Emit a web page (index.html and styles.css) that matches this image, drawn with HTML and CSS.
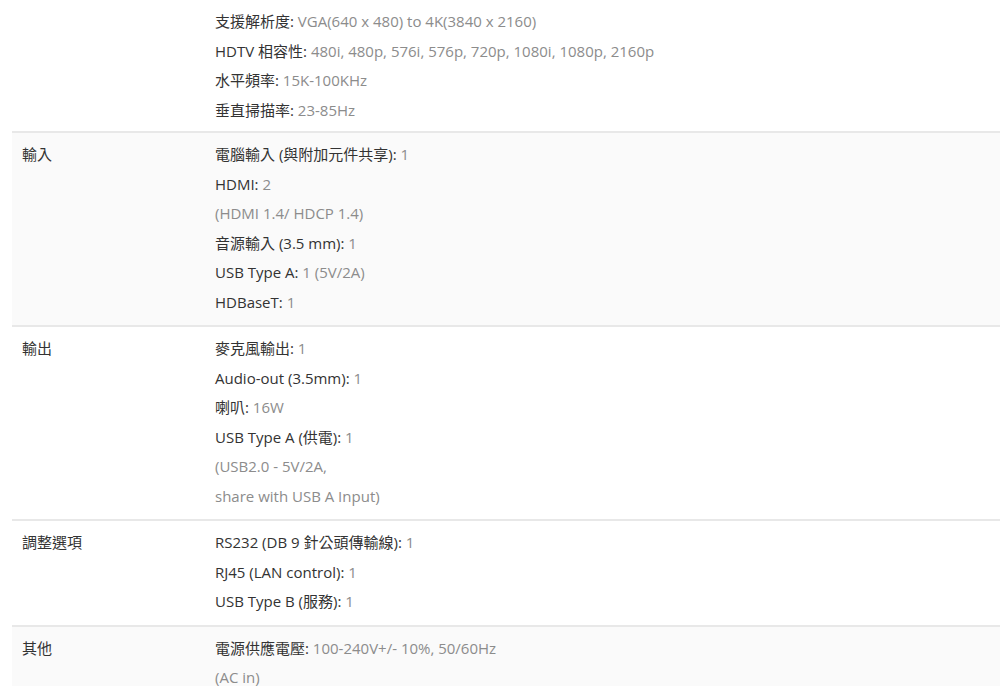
FILE: index.html
```html
<!DOCTYPE html>
<html lang="zh-Hant">
<head>
    <meta charset="UTF-8">
    <meta name="viewport" content="width=device-width, initial-scale=1.0">
    <title>規格</title>
    <link rel="stylesheet" href="styles.css">
</head>
<body>
    <div class="spec-table">
        <div class="spec-row first">
            <div class="spec-name"></div>
            <div class="spec-value">
                <p><span class="key">支援解析度:</span> VGA(640 x 480) to 4K(3840 x 2160)</p>
                <p><span class="key">HDTV 相容性:</span> 480i, 480p, 576i, 576p, 720p, 1080i, 1080p, 2160p</p>
                <p><span class="key">水平頻率:</span> 15K-100KHz</p>
                <p><span class="key">垂直掃描率:</span> 23-85Hz</p>
            </div>
        </div>
        <div class="spec-row shade">
            <div class="spec-name">輸入</div>
            <div class="spec-value">
                <p><span class="key">電腦輸入 (與附加元件共享):</span> 1</p>
                <p><span class="key">HDMI:</span> 2</p>
                <p>(HDMI 1.4/ HDCP 1.4)</p>
                <p><span class="key">音源輸入 (3.5 mm):</span> 1</p>
                <p><span class="key">USB Type A:</span> 1 (5V/2A)</p>
                <p><span class="key">HDBaseT:</span> 1</p>
            </div>
        </div>
        <div class="spec-row">
            <div class="spec-name">輸出</div>
            <div class="spec-value">
                <p><span class="key">麥克風輸出:</span> 1</p>
                <p><span class="key">Audio-out (3.5mm):</span> 1</p>
                <p><span class="key">喇叭:</span> 16W</p>
                <p><span class="key">USB Type A (供電):</span> 1</p>
                <p>(USB2.0 - 5V/2A,</p>
                <p>share with USB A Input)</p>
            </div>
        </div>
        <div class="spec-row">
            <div class="spec-name">調整選項</div>
            <div class="spec-value">
                <p><span class="key">RS232 (DB 9 針公頭傳輸線):</span> 1</p>
                <p><span class="key">RJ45 (LAN control):</span> 1</p>
                <p><span class="key">USB Type B (服務):</span> 1</p>
            </div>
        </div>
        <div class="spec-row shade">
            <div class="spec-name">其他</div>
            <div class="spec-value">
                <p><span class="key">電源供應電壓:</span> 100-240V+/- 10%, 50/60Hz</p>
                <p>(AC in)</p>
            </div>
        </div>
    </div>
</body>
</html>
```

FILE: styles.css
```css
body {
    margin: 0;
    background-color: #fff;
    font-family: "Open Sans", "Noto Sans CJK TC", sans-serif;
    font-size: 15px;
    color: #8c8c8c;
}
.spec-table {
    margin-left: 12px;
}
.spec-row {
    display: flex;
    border-top: 2px solid #e8e8e8;
    padding: 7px 0 8px;
}
.spec-row.first {
    border-top: none;
    padding-bottom: 6px;
}
.spec-row.shade {
    background-color: #fafafa;
}
.spec-name {
    width: 193px;
    padding-left: 10px;
    color: #333;
    line-height: 29.5px;
}
.spec-value p {
    margin: 0;
    line-height: 29.5px;
}
.key {
    color: #333;
}
```
